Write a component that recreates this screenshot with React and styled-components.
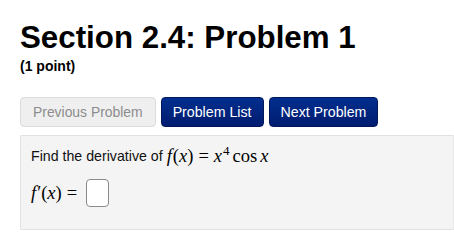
import React from "react";
import styled, { createGlobalStyle } from "styled-components";

const GlobalStyle = createGlobalStyle`
  html, body {
    margin: 0;
    padding: 0;
    background: #ffffff;
  }
  body {
    font-family: "Liberation Sans", Arial, sans-serif;
    color: #000;
  }
`;

const Page = styled.main`
  padding-left: 20px;
  padding-top: 20px;
`;

const Title = styled.h1`
  margin: 0;
  font-size: 31.3px;
  line-height: 36px;
  font-weight: bold;
  white-space: nowrap;
`;

const Points = styled.div`
  margin-top: 2px;
  font-size: 14px;
  line-height: 16px;
  font-weight: bold;
`;

const Nav = styled.nav`
  display: flex;
  gap: 5px;
  margin-top: 23px;
`;

const NavButton = styled.button`
  height: 30px;
  border-radius: 4px;
  font-family: "Liberation Sans", Arial, sans-serif;
  font-size: ${(p) => (p.$disabled ? "13.9px" : "14.2px")};
  line-height: 28px;
  white-space: nowrap;
  cursor: ${(p) => (p.$disabled ? "default" : "pointer")};
  color: ${(p) => (p.$disabled ? "#8c8c8c" : "#ffffff")};
  background: ${(p) =>
    p.$disabled
      ? "#efefef"
      : "linear-gradient(to bottom, #022e8e 0%, #001c70 100%)"};
  border: 1px solid ${(p) => (p.$disabled ? "#dcdcdc" : "#00195c")};
  padding: ${(p) => (p.$disabled ? "0 12px" : "0 11px")};
`;

const Panel = styled.section`
  margin-top: 8px;
  background: #f4f4f4;
  border: 1px solid #e2e2e2;
  border-right: 1px solid #e8e8e8;
  border-radius: 2px 0 0 2px;
  padding: 10px 10px 22px 10px;
`;

const Line = styled.div`
  font-size: 14.2px;
  line-height: 20px;
  color: #111;
  display: flex;
  align-items: center;
  white-space: nowrap;
`;

const AnswerLine = styled(Line)`
  margin-top: 13px;
  gap: 4px;
`;

const Math = styled.span`
  font-family: "Liberation Serif", "Times New Roman", serif;
  font-size: 18.5px;
  color: #000;
  margin-left: ${(p) => p.$gap || 0};
`;

const Var = styled.i`
  font-style: italic;
  margin-right: ${(p) => p.$r || 0};
`;

const Op = styled.span`
  margin: 0 5px;
`;

const Fn = styled.span`
  margin-right: 3px;
`;

const Sup = styled.sup`
  font-size: 13px;
  vertical-align: 7px;
  line-height: 0;
  margin-left: 1px;
  margin-right: 3px;
`;

const AnswerBox = styled.input`
  width: 23px;
  height: 28px;
  box-sizing: border-box;
  border: 1px solid #8a8a8a;
  border-radius: 4px;
  background: #ffffff;
  padding: 0;
`;

export default function App() {
  return (
    <>
      <GlobalStyle />
      <Page>
        <Title>Section 2.4: Problem 1</Title>
        <Points>(1 point)</Points>
        <Nav>
          <NavButton $disabled>Previous Problem</NavButton>
          <NavButton>Problem List</NavButton>
          <NavButton>Next Problem</NavButton>
        </Nav>
        <Panel>
          <Line>
            Find the derivative of
            <Math $gap="4px">
              <Var $r="1px">f</Var>(<Var>x</Var>)<Op>=</Op>
              <Var>x</Var>
              <Sup>4</Sup>
              <Fn>cos</Fn>
              <Var>x</Var>
            </Math>
          </Line>
          <AnswerLine>
            <Math>
              <Var $r="1px">f</Var>′(<Var>x</Var>)<Op>=</Op>
            </Math>
            <AnswerBox type="text" aria-label="answer" />
          </AnswerLine>
        </Panel>
      </Page>
    </>
  );
}
